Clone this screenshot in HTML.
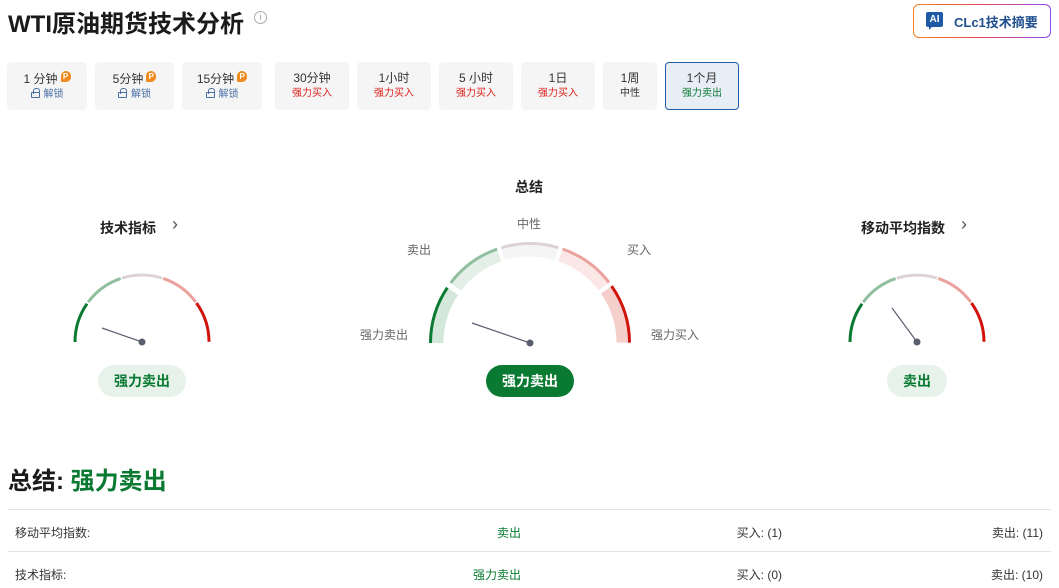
<!DOCTYPE html>
<html><head><meta charset="utf-8">
<style>
*{margin:0;padding:0;box-sizing:border-box}
body{width:1059px;height:588px;background:#fff;position:relative;overflow:hidden;font-family:"Liberation Sans","Noto Sans CJK SC",sans-serif;color:#222}
.a{position:absolute;white-space:nowrap}
.title{left:8px;top:4px;font-size:24px;font-weight:bold;color:#1a1a1a}
.info{left:254px;top:11px;width:13px;height:13px;border:1px solid #aaa;border-radius:50%;font-size:9px;color:#999;text-align:center;line-height:11px}
.aib{left:913px;top:4px;width:138px;height:34px;border-radius:6px;background:linear-gradient(90deg,#f58220,#e8435a,#8a4cf0)}
.aiin{left:914px;top:5px;width:136px;height:32px;border-radius:5px;background:#fff}
.tab{top:62px;height:48px;background:#f5f5f5;border-radius:4px;text-align:center}
.tab .l1{font-size:12px;color:#333;margin-top:9px;line-height:14px}
.tab .l2{font-size:10px;margin-top:3px;line-height:12px}
.r{color:#e0201a !important}.g{color:#0a7a32 !important}.b{color:#4a6fa5}
.pp{display:inline-block;width:10px;height:11px;background:#f08a1c;border-radius:5px 5px 5px 1px;color:#fff;font-size:8px;line-height:11px;font-weight:bold;vertical-align:4px;margin-left:3px}
.lock{display:inline-block;width:9px;height:6px;border:1px solid #4a6fa5;border-radius:1px;position:relative;margin-right:4px;vertical-align:-1px}
.lock:before{content:"";position:absolute;left:1px;top:-5px;width:5px;height:5px;border:1px solid #4a6fa5;border-bottom:none;border-radius:3px 3px 0 0}
.h{font-size:14px;font-weight:bold;color:#222}
.chev{font-size:18px;color:#555}
.lbl{font-size:12px;color:#666}
.pill{top:365px;height:32px;border-radius:16px;font-size:14px;font-weight:bold;text-align:center;line-height:32px}
.row{font-size:12px;color:#333}
</style></head><body>
<div class="a title">WTI原油期货技术分析</div>
<div class="a info">i</div>
<div class="a aib"></div>
<div class="a aiin"></div>
<div class="a" style="left:926px;top:12px;width:17px;height:15px;background:#1f5aa6;border-radius:2px;color:#fff;font-size:10px;font-weight:bold;text-align:center;line-height:15px">AI</div>
<div class="a" style="left:929px;top:26px;width:0;height:0;border-left:4px solid #1f5aa6;border-bottom:4px solid transparent"></div>
<div class="a" style="left:954px;top:12px;font-size:13px;font-weight:bold;color:#1f4f8f">CLc1技术摘要</div>

<div class="a tab" style="left:7px;width:80px"><div class="l1">1 分钟<span class="pp">P</span></div><div class="l2 b"><span class="lock"></span>解锁</div></div>
<div class="a tab" style="left:95px;width:79px"><div class="l1">5分钟<span class="pp">P</span></div><div class="l2 b"><span class="lock"></span>解锁</div></div>
<div class="a tab" style="left:182px;width:80px"><div class="l1">15分钟<span class="pp">P</span></div><div class="l2 b"><span class="lock"></span>解锁</div></div>
<div class="a tab" style="left:275px;width:74px"><div class="l1">30分钟</div><div class="l2 r">强力买入</div></div>
<div class="a tab" style="left:357px;width:74px"><div class="l1">1小时</div><div class="l2 r">强力买入</div></div>
<div class="a tab" style="left:439px;width:74px"><div class="l1">5 小时</div><div class="l2 r">强力买入</div></div>
<div class="a tab" style="left:521px;width:74px"><div class="l1">1日</div><div class="l2 r">强力买入</div></div>
<div class="a tab" style="left:603px;width:54px"><div class="l1">1周</div><div class="l2" style="color:#333">中性</div></div>
<div class="a tab" style="left:665px;width:74px;background:#e8eef6;border:1px solid #1f5fa6"><div class="l1" style="margin-top:8px">1个月</div><div class="l2 g">强力卖出</div></div>

<div class="a h" style="left:100px;top:218px">技术指标</div>
<div class="a chev" style="left:172px;top:214px">›</div>
<div class="a h" style="left:515px;top:177px">总结</div>
<div class="a h" style="left:861px;top:218px">移动平均指数</div>
<div class="a chev" style="left:961px;top:214px">›</div>

<div class="a lbl" style="left:360px;top:326px">强力卖出</div>
<div class="a lbl" style="left:407px;top:241px">卖出</div>
<div class="a lbl" style="left:517px;top:215px">中性</div>
<div class="a lbl" style="left:627px;top:241px">买入</div>
<div class="a lbl" style="left:651px;top:326px">强力买入</div>

<svg class="a" style="left:0;top:0" width="1059" height="420">
<g fill="none">
<g stroke-width="3">
<path d="M75 342 A67 67 0 0 1 209 342" pathLength="100" stroke="#0a7a32" stroke-dasharray="19.4 200" stroke-dashoffset="0"/>
<path d="M75 342 A67 67 0 0 1 209 342" pathLength="100" stroke="#8fbf9f" stroke-dasharray="19.4 200" stroke-dashoffset="-20.3"/>
<path d="M75 342 A67 67 0 0 1 209 342" pathLength="100" stroke="#ddd3d5" stroke-dasharray="19.4 200" stroke-dashoffset="-40.3"/>
<path d="M75 342 A67 67 0 0 1 209 342" pathLength="100" stroke="#eba29d" stroke-dasharray="19.4 200" stroke-dashoffset="-60.3"/>
<path d="M75 342 A67 67 0 0 1 209 342" pathLength="100" stroke="#d0140c" stroke-dasharray="19.7 200" stroke-dashoffset="-80.3"/>
</g>
<g stroke-width="3">
<path d="M850 342 A67 67 0 0 1 984 342" pathLength="100" stroke="#0a7a32" stroke-dasharray="19.4 200" stroke-dashoffset="0"/>
<path d="M850 342 A67 67 0 0 1 984 342" pathLength="100" stroke="#8fbf9f" stroke-dasharray="19.4 200" stroke-dashoffset="-20.3"/>
<path d="M850 342 A67 67 0 0 1 984 342" pathLength="100" stroke="#ddd3d5" stroke-dasharray="19.4 200" stroke-dashoffset="-40.3"/>
<path d="M850 342 A67 67 0 0 1 984 342" pathLength="100" stroke="#eba29d" stroke-dasharray="19.4 200" stroke-dashoffset="-60.3"/>
<path d="M850 342 A67 67 0 0 1 984 342" pathLength="100" stroke="#d0140c" stroke-dasharray="19.7 200" stroke-dashoffset="-80.3"/>
</g>
<g stroke-width="14">
<path d="M436.5 343 A93.5 93.5 0 0 1 623.5 343" pathLength="100" stroke="#d3e8da" stroke-dasharray="18.8 200" stroke-dashoffset="0"/>
<path d="M436.5 343 A93.5 93.5 0 0 1 623.5 343" pathLength="100" stroke="#e3efe7" stroke-dasharray="18.6 200" stroke-dashoffset="-20.7"/>
<path d="M436.5 343 A93.5 93.5 0 0 1 623.5 343" pathLength="100" stroke="#f5f5f5" stroke-dasharray="18.6 200" stroke-dashoffset="-40.7"/>
<path d="M436.5 343 A93.5 93.5 0 0 1 623.5 343" pathLength="100" stroke="#fbe7e6" stroke-dasharray="18.6 200" stroke-dashoffset="-60.7"/>
<path d="M436.5 343 A93.5 93.5 0 0 1 623.5 343" pathLength="100" stroke="#f5cfcc" stroke-dasharray="19.3 200" stroke-dashoffset="-80.7"/>
</g>
<g stroke-width="3">
<path d="M430.5 343 A99.5 99.5 0 0 1 629.5 343" pathLength="100" stroke="#0a7a32" stroke-dasharray="18.8 200" stroke-dashoffset="0"/>
<path d="M430.5 343 A99.5 99.5 0 0 1 629.5 343" pathLength="100" stroke="#8fbf9f" stroke-dasharray="18.6 200" stroke-dashoffset="-20.7"/>
<path d="M430.5 343 A99.5 99.5 0 0 1 629.5 343" pathLength="100" stroke="#ddd3d5" stroke-dasharray="18.6 200" stroke-dashoffset="-40.7"/>
<path d="M430.5 343 A99.5 99.5 0 0 1 629.5 343" pathLength="100" stroke="#eba29d" stroke-dasharray="18.6 200" stroke-dashoffset="-60.7"/>
<path d="M430.5 343 A99.5 99.5 0 0 1 629.5 343" pathLength="100" stroke="#d0140c" stroke-dasharray="19.3 200" stroke-dashoffset="-80.7"/>
</g>
<g stroke="#5a5f70" stroke-width="1.2">
<line x1="102" y1="328" x2="142" y2="342"/>
<line x1="892" y1="308" x2="917" y2="342"/>
<line x1="472" y1="323" x2="530" y2="343"/>
</g>
</g>
<g fill="#5a5f70"><circle cx="142" cy="342" r="3.5"/><circle cx="917" cy="342" r="3.5"/><circle cx="530" cy="343" r="3.5"/></g>
</svg>

<div class="a pill g" style="left:98px;width:88px;background:#e6f2ea">强力卖出</div>
<div class="a pill" style="left:486px;width:88px;background:#0a7a32;color:#fff">强力卖出</div>
<div class="a pill g" style="left:887px;width:60px;background:#e6f2ea">卖出</div>

<div class="a" style="left:8px;top:461px;font-size:24px;font-weight:bold;color:#1a1a1a">总结: <span class="g">强力卖出</span></div>
<div class="a" style="left:8px;top:509px;width:1043px;height:1px;background:#e5e5e5"></div>
<div class="a" style="left:8px;top:551px;width:1043px;height:1px;background:#e5e5e5"></div>
<div class="a row" style="left:15px;top:524px">移动平均指数:</div>
<div class="a row g" style="right:538px;top:524px">卖出</div>
<div class="a row" style="right:277px;top:524px">买入: (1)</div>
<div class="a row" style="right:16px;top:524px">卖出: (11)</div>
<div class="a row" style="left:15px;top:566px">技术指标:</div>
<div class="a row g" style="right:538px;top:566px">强力卖出</div>
<div class="a row" style="right:277px;top:566px">买入: (0)</div>
<div class="a row" style="right:16px;top:566px">卖出: (10)</div>
</body></html>
